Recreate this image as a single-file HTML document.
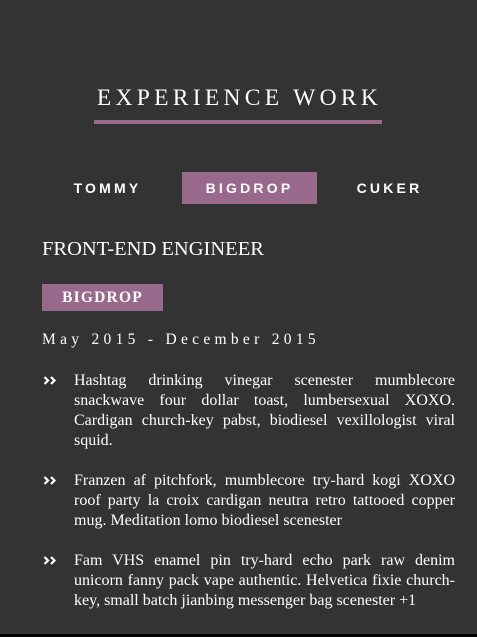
<!DOCTYPE html>
<html><head><style>
html,body{margin:0;padding:0}
body{width:477px;height:637px;background:#333;color:#fff;position:relative;overflow:hidden;font-family:"Liberation Serif",serif}
.title{position:absolute;left:0;width:477px;top:84px;text-align:center;font-size:23.5px;letter-spacing:4.3px;line-height:28px;padding-left:2px;box-sizing:border-box}
.ul{position:absolute;left:94px;top:120px;width:288px;height:4px;background:#98698a}
.tab{position:absolute;top:172px;height:32px;line-height:32px;font-family:"Liberation Sans",sans-serif;font-weight:bold;font-size:14px;letter-spacing:3.2px;text-align:center}
.h{position:absolute;left:42px;top:237px;font-size:20.5px;line-height:24px}
.badge{position:absolute;left:42px;top:284px;width:121px;height:27px;background:#98698a;font-weight:bold;font-size:15.5px;letter-spacing:1.2px;line-height:27px;text-align:center}
.date{position:absolute;left:42px;top:330px;font-size:15.5px;letter-spacing:4.3px;line-height:20px}
ul{position:absolute;left:74px;top:371px;width:381px;margin:0;padding:0;list-style:none;font-size:16px;line-height:20px;text-align:justify}
li{margin-bottom:20px;position:relative}
li svg{position:absolute;left:-31px;top:5px}
.bot{position:absolute;left:0;top:634px;width:477px;height:3px;background:#000}
</style></head><body>
<div class="title">EXPERIENCE WORK</div>
<div class="ul"></div>
<div class="tab" style="left:60px;width:95px">TOMMY</div>
<div class="tab" style="left:182px;width:135px;background:#98698a">BIGDROP</div>
<div class="tab" style="left:342px;width:95px">CUKER</div>
<div class="h">FRONT-END ENGINEER</div>
<div class="badge">BIGDROP</div>
<div class="date">May 2015 - December 2015</div>
<ul>
<li><svg width="14" height="9" viewBox="0 0 14 9"><path d="M1.5 1L5 4.5L1.5 8M8 1L11.5 4.5L8 8" fill="none" stroke="#fff" stroke-width="2.2"/></svg>Hashtag drinking vinegar scenester mumblecore snackwave four dollar toast, lumbersexual XOXO. Cardigan church-key pabst, biodiesel vexillologist viral squid.</li>
<li><svg width="14" height="9" viewBox="0 0 14 9"><path d="M1.5 1L5 4.5L1.5 8M8 1L11.5 4.5L8 8" fill="none" stroke="#fff" stroke-width="2.2"/></svg>Franzen af pitchfork, mumblecore try-hard kogi XOXO roof party la croix cardigan neutra retro tattooed copper mug. Meditation lomo biodiesel scenester</li>
<li><svg width="14" height="9" viewBox="0 0 14 9"><path d="M1.5 1L5 4.5L1.5 8M8 1L11.5 4.5L8 8" fill="none" stroke="#fff" stroke-width="2.2"/></svg>Fam VHS enamel pin try-hard echo park raw denim unicorn fanny pack vape authentic. Helvetica fixie church-key, small batch jianbing messenger bag scenester +1</li>
</ul>
<div class="bot"></div>
</body></html>
